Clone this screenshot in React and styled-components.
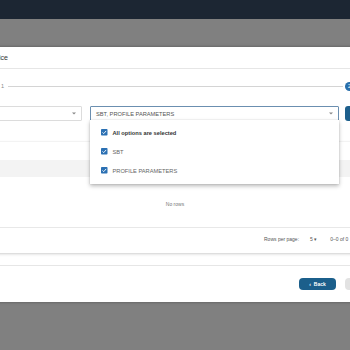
import React from "react";
import styled, { createGlobalStyle } from "styled-components";

const Global = createGlobalStyle`
  html, body { margin: 0; padding: 0; overflow: hidden; background: #808080; }
  body { font-family: "Liberation Sans", Arial, sans-serif; color: #444; }
`;

const TopBar = styled.div`
  height: 19px;
  background: #1c2633;
`;

const Backdrop = styled.div`
  height: 331px;
  box-sizing: border-box;
  padding-top: 28px;
  background: #808080;
`;

const Modal = styled.div`
  margin-left: -100px;
  width: 550px;
  height: 255px;
  background: #fff;
  box-shadow: 0 0 3px rgba(0, 0, 0, 0.35);
`;

const Header = styled.div`
  height: 22px;
  box-sizing: border-box;
  display: flex;
  align-items: center;
  border-bottom: 1px solid #e6e6e6;
`;

const Title = styled.div`
  width: 108px;
  text-align: right;
  font-size: 7px;
  color: #333;
`;

const Stepper = styled.div`
  height: 34px;
  display: flex;
  align-items: center;
`;

const StepLabel = styled.div`
  width: 104px;
  text-align: right;
  font-size: 5.5px;
  color: #888;
`;

const Connector = styled.div`
  flex: 1;
  height: 1px;
  margin: 0 2px 0 4px;
  background: #d4d4d4;
`;

const StepIcon = styled.div`
  width: 9px;
  height: 9px;
  border-radius: 50%;
  background: #2a6fab;
  color: #fff;
  font-size: 5px;
  display: flex;
  align-items: center;
  justify-content: center;
`;

const StepTail = styled.div`
  width: 96px;
`;

const FormRow = styled.div`
  margin-top: 3px;
  height: 15px;
  padding-left: 30px;
  display: flex;
  gap: 8px;
`;

const Select = styled.div`
  position: relative;
  width: ${p => p.$w}px;
  box-sizing: border-box;
  border: 1px solid ${p => (p.$focused ? "#6b8fb0" : "#dcdcdc")};
  border-radius: 1px;
  display: flex;
  align-items: center;
  padding: 0 5px;
  font-size: 5.7px;
  color: #555;
  background: #fff;
`;

const SelectText = styled.span`
  flex: 1;
  white-space: nowrap;
`;

const Arrow = () => (
  <svg width="4" height="3" viewBox="0 0 4 3">
    <path d="M0 0.5 L4 0.5 L2 2.5 Z" fill="#888" />
  </svg>
);

const AddButton = styled.div`
  width: 40px;
  margin-left: -2px;
  background: #1d5f8c;
  border-radius: 3px;
`;

const Menu = styled.div`
  position: absolute;
  top: 100%;
  left: -1px;
  width: 249px;
  box-sizing: border-box;
  padding: 3px 0 4px;
  background: #fff;
  box-shadow: 0 2px 4px rgba(0, 0, 0, 0.28), 0 0 1px rgba(0, 0, 0, 0.2);
  z-index: 5;
`;

const MenuItem = styled.div`
  height: 19px;
  display: flex;
  align-items: center;
  gap: 5px;
  padding-left: 11px;
  font-size: 5.7px;
  font-weight: ${p => (p.$bold ? 700 : 400)};
  color: ${p => (p.$bold ? "#333" : "#666")};
`;

const Check = () => (
  <svg width="6.5" height="6.5" viewBox="0 0 10 10">
    <rect width="10" height="10" rx="1.2" fill="#2b70b3" />
    <path d="M2.2 5.2 L4.2 7.1 L7.9 3" stroke="#fff" strokeWidth="1.4" fill="none" />
  </svg>
);

const Table = styled.div`
  margin: 21px 16px 0;
  background: #fff;
  box-shadow: 0 1px 3px rgba(0, 0, 0, 0.18), 0 0 1px rgba(0, 0, 0, 0.12);
`;

const Toolbar = styled.div`
  height: 18px;
`;

const HeadBand = styled.div`
  height: 17px;
  background: #f3f3f3;
`;

const Body = styled.div`
  height: 50px;
  display: flex;
  align-items: center;
  justify-content: center;
  font-size: 5px;
  color: #777;
  padding-top: 4px;
  box-sizing: border-box;
`;

const Footer = styled.div`
  height: 26px;
  box-sizing: border-box;
  border-top: 1px solid #e8e8e8;
  display: flex;
  align-items: center;
  padding: 0 0 4px 348px;
  font-size: 5px;
  color: #555;
`;

const PerPage = styled.span`
  margin: 0 13px 0 11px;
`;

const Actions = styled.div`
  margin-top: 12px;
  height: 37px;
  box-sizing: border-box;
  border-top: 1px solid #e6e6e6;
  display: flex;
  align-items: center;
  justify-content: flex-end;
  gap: 9px;
  padding-right: 65px;
`;

const Button = styled.div`
  width: ${p => p.$w}px;
  height: 12px;
  border-radius: 4px;
  display: flex;
  align-items: center;
  justify-content: center;
  gap: 3px;
  font-size: 5px;
  font-weight: 700;
  color: ${p => (p.$disabled ? "#aaa" : "#fff")};
  background: ${p => (p.$disabled ? "#e2e2e2" : "#1b5f8b")};
`;

export default function App() {
  return (
    <>
      <Global />
      <TopBar />
      <Backdrop>
        <Modal>
          <Header>
            <Title>Import Device</Title>
          </Header>
          <Stepper>
            <StepLabel>Step 1</StepLabel>
            <Connector />
            <StepIcon>2</StepIcon>
            <StepTail />
          </Stepper>
          <FormRow>
            <Select $w={152}>
              <SelectText />
              <Arrow />
            </Select>
            <Select $w={249} $focused>
              <SelectText>SBT, PROFILE PARAMETERS</SelectText>
              <Arrow />
              <Menu>
                <MenuItem $bold>
                  <Check />
                  All options are selected
                </MenuItem>
                <MenuItem>
                  <Check />
                  SBT
                </MenuItem>
                <MenuItem>
                  <Check />
                  PROFILE PARAMETERS
                </MenuItem>
              </Menu>
            </Select>
            <AddButton />
          </FormRow>
          <Table>
            <Toolbar />
            <HeadBand />
            <Body>No rows</Body>
            <Footer>
              <span>Rows per page:</span>
              <PerPage>5 ▾</PerPage>
              <span>0–0 of 0</span>
            </Footer>
          </Table>
          <Actions>
            <Button $w={37}>
              <span>‹</span>
              <span>Back</span>
            </Button>
            <Button $w={40} $disabled>
              Next
            </Button>
          </Actions>
        </Modal>
      </Backdrop>
    </>
  );
}
